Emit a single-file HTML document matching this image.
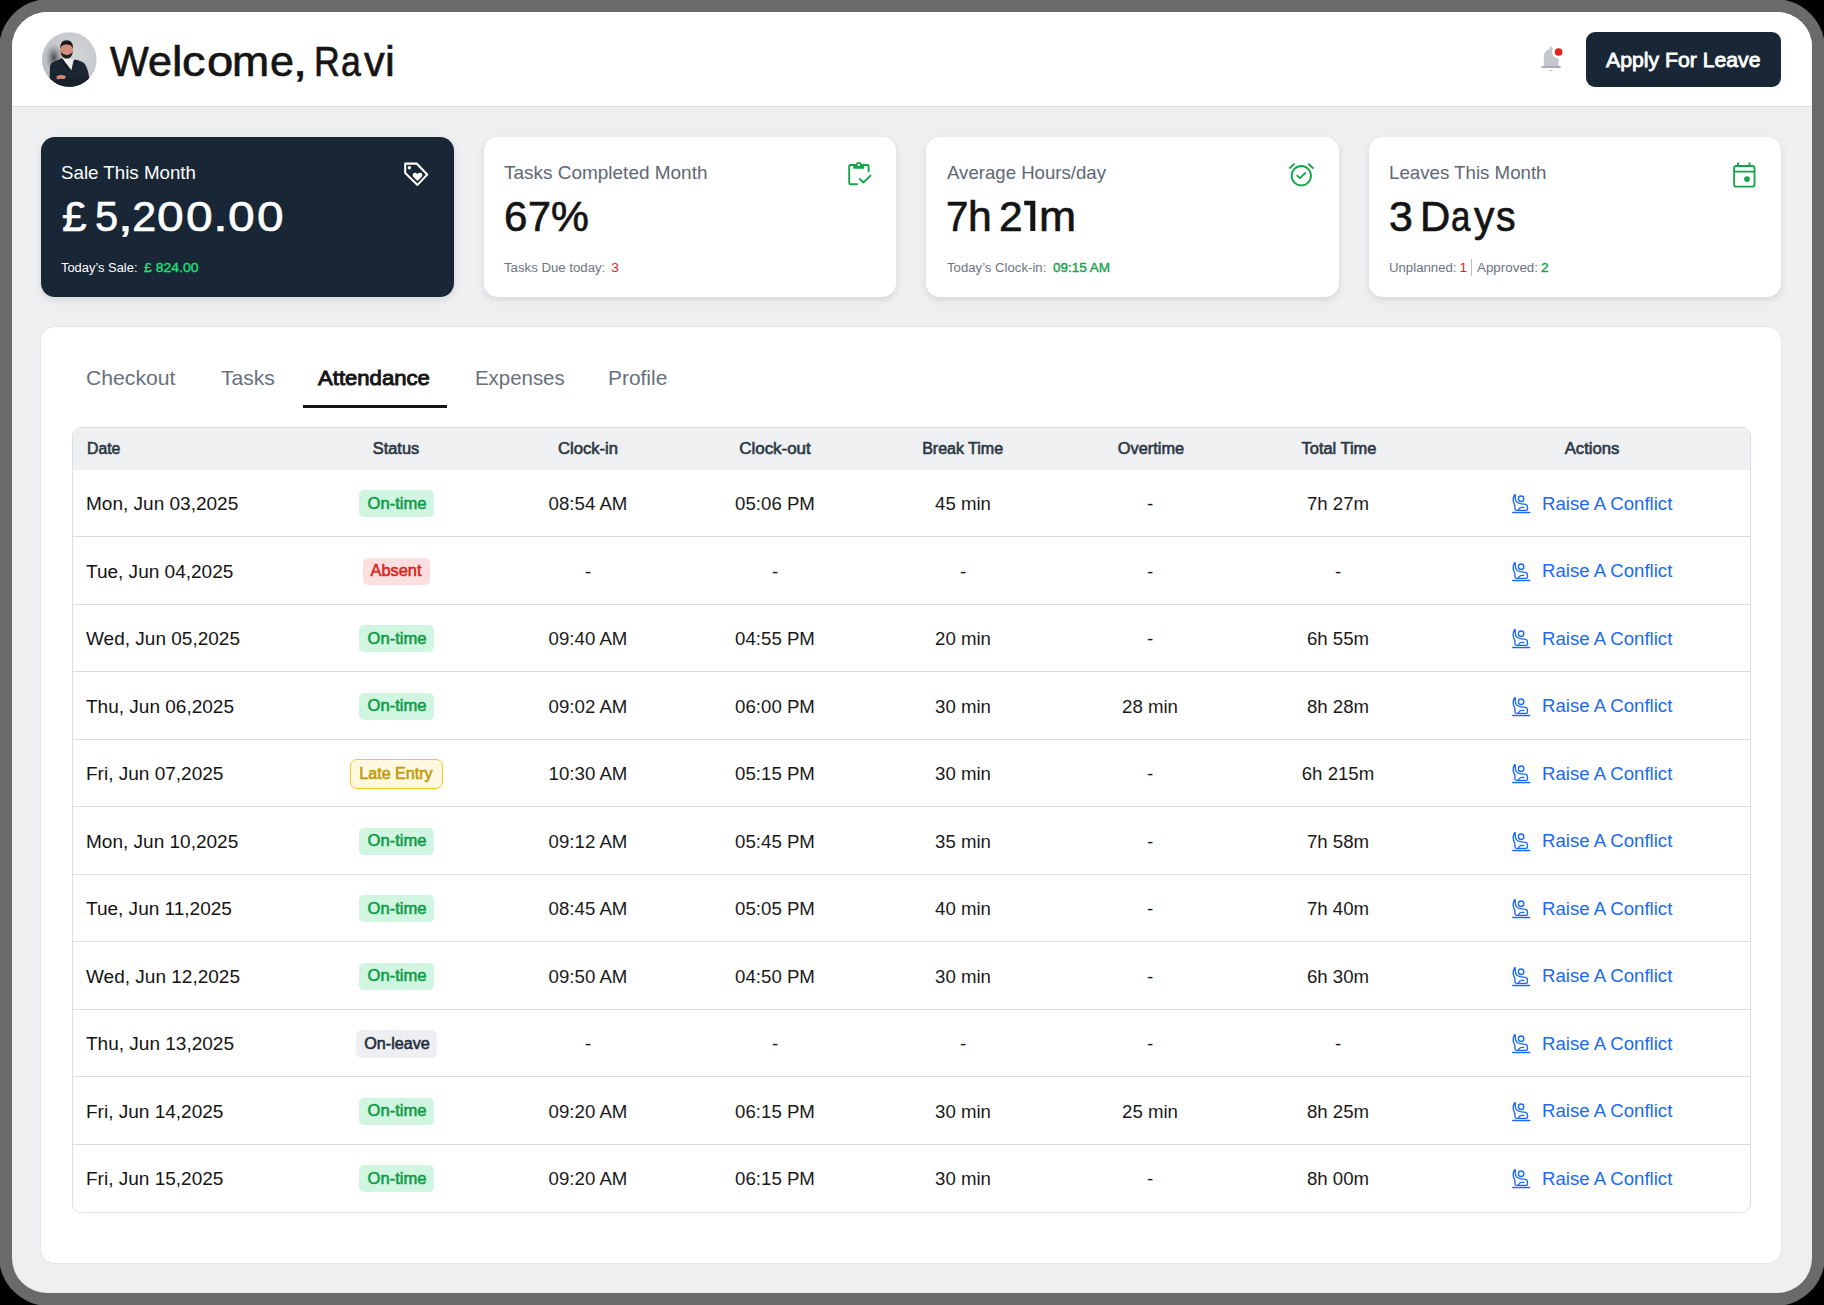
<!DOCTYPE html>
<html><head><meta charset="utf-8"><title>Attendance</title>
<style>
html,body{margin:0;padding:0;}
body{width:1824px;height:1305px;background:#000;position:relative;overflow:hidden;font-family:"Liberation Sans", sans-serif;}
.frame{position:absolute;left:-1.2px;top:-1.2px;width:1826.4px;height:1307.4px;background:#6A6A6A;border-radius:50px;}
.screen{position:absolute;left:0;top:0;width:1824px;height:1305px;background:#EEEFF1;clip-path:inset(12px round 35px);}
.t{position:absolute;white-space:nowrap;}
.r{position:absolute;}
</style></head><body>
<div class="frame"></div>
<div class="screen">
<div class="r" style="left:12px;top:12px;width:1800px;height:94px;background:#fff;"></div>
<div class="r" style="left:12px;top:106px;width:1800px;height:1px;background:#DDE0E3;"></div>
<svg class="r" style="left:42px;top:32px" width="55" height="55" viewBox="0 0 55 55">
<defs><radialGradient id="ag" cx="0.6" cy="0.4" r="0.7"><stop offset="0" stop-color="#d2d4d7"/><stop offset="0.7" stop-color="#c6c9cd"/><stop offset="1" stop-color="#b0b3b8"/></radialGradient>
<radialGradient id="sh" cx="0.5" cy="0.5" r="0.5"><stop offset="0" stop-color="#3a3d42" stop-opacity="0.9"/><stop offset="1" stop-color="#6a6d72" stop-opacity="0"/></radialGradient>
<clipPath id="ac"><circle cx="27.3" cy="27.5" r="27.3"/></clipPath></defs>
<g clip-path="url(#ac)">
<rect width="55" height="55" fill="url(#ag)"/>
<ellipse cx="12" cy="26" rx="9" ry="15" fill="url(#sh)"/>
<path d="M7 60 L8 35 C8.5 31 11 30 15 28.5 L20 26 L24.5 28 L29 30 L33 27.5 C37 28.5 41 29.5 42.5 31.5 C45 35 46.5 40 47 45 L50 60 Z" fill="#1b2633"/>
<path d="M19.8 25.8 L31.8 27.4 L29.3 38.5 Z" fill="#efefef"/>
<path d="M20 26.5 L29 38 L27 39 L18.5 28 Z" fill="#151c26"/>
<path d="M14.5 44.5 C17 42.5 21.5 42.5 24 44.5 L22.5 47.5 C20 46.5 17 46.8 15 47.5 Z" fill="#d48774"/>
<path d="M11 50 C20 46 32 46 46 44 L47 56 L10 56 Z" fill="#18212c"/>
<ellipse cx="24.6" cy="17" rx="6.2" ry="7.6" fill="#d38a76"/>
<path d="M18.3 17 C17.8 11 20.5 8.2 24.6 8.2 C28.7 8.2 31.4 11 31 17 C30 13.5 28 12.6 24.6 12.6 C21.2 12.6 19.2 13.5 18.3 17 Z" fill="#1a1a1a"/>
<path d="M18.5 18.5 C19 24.5 21.5 26.6 24.8 26.6 C28.1 26.6 30.5 24.5 30.9 18.5 C30 21.5 28.3 22.5 24.8 22.5 C21.3 22.5 19.6 21.5 18.5 18.5 Z" fill="#262220"/>
<path d="M22.3 21.3 C23.5 22.3 26 22.3 27.3 21.3 C26.5 23 23.2 23 22.3 21.3 Z" fill="#f2f2f2"/>
</g></svg>
<div class="t" style="top:40.00px;left:109.69px;font-size:43px;line-height:43px;color:#151515;font-weight:400;-webkit-text-stroke:0.7px #151515;transform:scaleX(0.9549);transform-origin:left 50%;">W</div>
<div class="t" style="top:40.00px;left:148.34px;font-size:43px;line-height:43px;color:#151515;font-weight:400;-webkit-text-stroke:0.7px #151515;transform:scaleX(1.0043);transform-origin:left 50%;">e</div>
<div class="t" style="top:40.00px;left:172.05px;font-size:43px;line-height:43px;color:#151515;font-weight:400;-webkit-text-stroke:0.7px #151515;transform:scaleX(1.0928);transform-origin:left 50%;">l</div>
<div class="t" style="top:40.00px;left:182.38px;font-size:43px;line-height:43px;color:#151515;font-weight:400;-webkit-text-stroke:0.7px #151515;transform:scaleX(1.0894);transform-origin:left 50%;">c</div>
<div class="t" style="top:40.00px;left:206.57px;font-size:43px;line-height:43px;color:#151515;font-weight:400;-webkit-text-stroke:0.7px #151515;transform:scaleX(1.0954);transform-origin:left 50%;">o</div>
<div class="t" style="top:40.00px;left:232.31px;font-size:43px;line-height:43px;color:#151515;font-weight:400;-webkit-text-stroke:0.7px #151515;transform:scaleX(1.0361);transform-origin:left 50%;">m</div>
<div class="t" style="top:40.00px;left:269.94px;font-size:43px;line-height:43px;color:#151515;font-weight:400;-webkit-text-stroke:0.7px #151515;transform:scaleX(1.0043);transform-origin:left 50%;">e</div>
<div class="t" style="top:40.00px;left:293.48px;font-size:43px;line-height:43px;color:#151515;font-weight:400;-webkit-text-stroke:0.7px #151515;transform:scaleX(1.1803);transform-origin:left 50%;">,</div>
<div class="t" style="top:40.00px;left:314.42px;font-size:43px;line-height:43px;color:#151515;font-weight:400;-webkit-text-stroke:0.7px #151515;transform:scaleX(0.8307);transform-origin:left 50%;">R</div>
<div class="t" style="top:40.00px;left:340.95px;font-size:43px;line-height:43px;color:#151515;font-weight:400;-webkit-text-stroke:0.7px #151515;transform:scaleX(0.8289);transform-origin:left 50%;">a</div>
<div class="t" style="top:40.00px;left:363.68px;font-size:43px;line-height:43px;color:#151515;font-weight:400;-webkit-text-stroke:0.7px #151515;transform:scaleX(0.9608);transform-origin:left 50%;">v</div>
<div class="t" style="top:40.00px;left:385.14px;font-size:43px;line-height:43px;color:#151515;font-weight:400;-webkit-text-stroke:0.7px #151515;transform:scaleX(1.0259);transform-origin:left 50%;">i</div>
<svg class="r" style="left:1530px;top:38px" width="45" height="42" viewBox="0 0 45 42">
<path d="M13.8 28.4 L13.8 19.2 C13.8 15 16 12.2 19.6 11.2 C19.7 9.6 20.3 8.4 21.1 8.4 C21.9 8.4 22.6 9.6 22.7 11.3 A6.5 6.5 0 0 0 28.6 20.5 L28.6 28.4 Z" fill="#c4c7cc"/>
<rect x="11.3" y="28" width="19.6" height="2.1" rx="1.05" fill="#a9adb3"/>
<path d="M19.2 32.1 Q21.1 33.9 23 32.1 Z" fill="#a9adb3"/>
<circle cx="28.6" cy="14" r="3.85" fill="#e0241b"/>
</svg>
<div class="r" style="left:1586px;top:32px;width:195px;height:55px;background:#182635;border-radius:9px;"></div>
<div class="t" style="top:50.00px;left:1605.80px;font-size:20.6px;line-height:20.6px;color:#ffffff;font-weight:400;-webkit-text-stroke-width:0.8px;transform:scaleX(1.0302);transform-origin:left 50%;">Apply For Leave</div>
<div class="r" style="left:41px;top:137px;width:413px;height:160px;background:#182635;border-radius:14px;box-shadow:0 3px 7px rgba(20,30,40,0.11);"></div>
<div class="r" style="left:484px;top:137px;width:412px;height:160px;background:#ffffff;border-radius:14px;box-shadow:0 3px 7px rgba(20,30,40,0.11);"></div>
<div class="r" style="left:926px;top:137px;width:413px;height:160px;background:#ffffff;border-radius:14px;box-shadow:0 3px 7px rgba(20,30,40,0.11);"></div>
<div class="r" style="left:1369px;top:137px;width:412px;height:160px;background:#ffffff;border-radius:14px;box-shadow:0 3px 7px rgba(20,30,40,0.11);"></div>
<div class="t" style="top:165.30px;left:61.00px;font-size:17.9px;line-height:17.9px;color:#ffffff;font-weight:400;transform:scaleX(1.0469);transform-origin:left 50%;">Sale This Month</div>
<div class="t" style="top:195.00px;left:61.71px;font-size:43px;line-height:43px;color:#ffffff;font-weight:400;-webkit-text-stroke:0.7px #ffffff;transform:scaleX(1.0296);transform-origin:left 50%;">£</div>
<div class="t" style="top:195.00px;left:95.09px;font-size:43px;line-height:43px;color:#ffffff;font-weight:400;-webkit-text-stroke:0.7px #ffffff;transform:scaleX(0.9677);transform-origin:left 50%;">5</div>
<div class="t" style="top:195.00px;left:118.31px;font-size:43px;line-height:43px;color:#ffffff;font-weight:400;-webkit-text-stroke:0.7px #ffffff;transform:scaleX(1.2500);transform-origin:left 50%;">,</div>
<div class="t" style="top:195.00px;left:132.20px;font-size:43px;line-height:43px;color:#ffffff;font-weight:400;-webkit-text-stroke:0.7px #ffffff;">2</div>
<div class="t" style="top:195.00px;left:156.73px;font-size:43px;line-height:43px;color:#ffffff;font-weight:400;-webkit-text-stroke:0.7px #ffffff;transform:scaleX(1.1151);transform-origin:left 50%;">0</div>
<div class="t" style="top:195.00px;left:185.63px;font-size:43px;line-height:43px;color:#ffffff;font-weight:400;-webkit-text-stroke:0.7px #ffffff;transform:scaleX(1.1151);transform-origin:left 50%;">0</div>
<div class="t" style="top:195.00px;left:212.93px;font-size:43px;line-height:43px;color:#ffffff;font-weight:400;-webkit-text-stroke:0.7px #ffffff;transform:scaleX(1.2442);transform-origin:left 50%;">.</div>
<div class="t" style="top:195.00px;left:227.73px;font-size:43px;line-height:43px;color:#ffffff;font-weight:400;-webkit-text-stroke:0.7px #ffffff;transform:scaleX(1.1151);transform-origin:left 50%;">0</div>
<div class="t" style="top:195.00px;left:257.44px;font-size:43px;line-height:43px;color:#ffffff;font-weight:400;-webkit-text-stroke:0.7px #ffffff;transform:scaleX(1.1104);transform-origin:left 50%;">0</div>
<div class="t" style="top:261.40px;left:61.30px;font-size:13.7px;line-height:13.7px;color:#ffffff;font-weight:400;transform:scaleX(0.9424);transform-origin:left 50%;">Today’s Sale:</div>
<div class="t" style="top:261.40px;left:144.00px;font-size:13.7px;line-height:13.7px;color:#1CE27B;font-weight:400;-webkit-text-stroke-width:0.35px;transform:scaleX(1.0229);transform-origin:left 50%;">£ 824.00</div>
<svg class="r" style="left:395px;top:155px" width="45" height="40" viewBox="0 0 45 40">
<path d="M10.2 8.6 L21.6 8.6 L32.2 19.6 L22.5 29.9 L10.2 17.9 Z" fill="none" stroke="#fff" stroke-width="2.1" stroke-linejoin="round"/>
<circle cx="14.4" cy="12.7" r="1.7" fill="#fff"/>
<path d="M22.5 25.9 L18.5 22.1 C17 20.6 17.6 18.1 19.6 17.8 C20.9 17.6 21.8 18.3 22.5 19.1 C23.2 18.3 24.1 17.6 25.4 17.8 C27.4 18.1 28 20.6 26.5 22.1 Z" fill="#fff"/>
</svg>
<div class="t" style="top:164.30px;left:504.00px;font-size:18.2px;line-height:18.2px;color:#5D6874;font-weight:400;transform:scaleX(1.0430);transform-origin:left 50%;">Tasks Completed Month</div>
<div class="t" style="top:195.00px;left:504.15px;font-size:43px;line-height:43px;color:#141414;font-weight:400;-webkit-text-stroke:0.7px #141414;transform:scaleX(0.9773);transform-origin:left 50%;">6</div>
<div class="t" style="top:195.00px;left:527.50px;font-size:43px;line-height:43px;color:#141414;font-weight:400;-webkit-text-stroke:0.7px #141414;transform:scaleX(0.9594);transform-origin:left 50%;">7</div>
<div class="t" style="top:195.00px;left:551.42px;font-size:43px;line-height:43px;color:#141414;font-weight:400;-webkit-text-stroke:0.7px #141414;transform:scaleX(0.9896);transform-origin:left 50%;">%</div>
<div class="t" style="top:261.40px;left:504.00px;font-size:13.7px;line-height:13.7px;color:#6A7480;font-weight:400;transform:scaleX(0.9648);transform-origin:left 50%;">Tasks Due today:</div>
<div class="t" style="top:261.40px;left:611.20px;font-size:13.7px;line-height:13.7px;color:#DC2626;font-weight:400;">3</div>
<svg class="r" style="left:838px;top:155px" width="45" height="40" viewBox="0 0 45 40">
<path d="M19 29.2 L12.4 29.2 C11.7 29.2 11.2 28.7 11.2 28 L11.2 11.2 C11.2 10.5 11.7 10 12.4 10 L29.4 10 C30.1 10 30.6 10.5 30.6 11.2 L30.6 16.3" fill="none" stroke="#16A34A" stroke-width="1.9" stroke-linecap="round"/>
<rect x="15.3" y="10" width="10.8" height="3.7" rx="0.8" fill="#16A34A"/>
<circle cx="20.7" cy="9.9" r="2.9" fill="#16A34A"/>
<circle cx="20.7" cy="9.9" r="1.2" fill="#fff"/>
<path d="M21.7 23.9 L25.4 27.5 L32.5 20.6" fill="none" stroke="#16A34A" stroke-width="1.9" stroke-linecap="round" stroke-linejoin="round"/>
</svg>
<div class="t" style="top:164.30px;left:946.60px;font-size:18.2px;line-height:18.2px;color:#5D6874;font-weight:400;transform:scaleX(1.0234);transform-origin:left 50%;">Average Hours/day</div>
<div class="t" style="top:195.00px;left:946.06px;font-size:43px;line-height:43px;color:#141414;font-weight:400;-webkit-text-stroke:0.7px #141414;transform:scaleX(0.9346);transform-origin:left 50%;">7</div>
<div class="t" style="top:195.00px;left:968.46px;font-size:43px;line-height:43px;color:#141414;font-weight:400;-webkit-text-stroke:0.7px #141414;transform:scaleX(0.9923);transform-origin:left 50%;">h</div>
<div class="t" style="top:195.00px;left:999.12px;font-size:43px;line-height:43px;color:#141414;font-weight:400;-webkit-text-stroke:0.7px #141414;transform:scaleX(0.9898);transform-origin:left 50%;">2</div>
<div class="t" style="top:195.00px;left:1038.61px;font-size:43px;line-height:43px;color:#141414;font-weight:400;-webkit-text-stroke:0.7px #141414;transform:scaleX(1.0361);transform-origin:left 50%;">m</div>
<svg class="r" style="left:1020px;top:195px" width="20" height="40" viewBox="1020 195 20 40"><path d="M1024.2 200.8 L1035.3 200.8 L1035.3 231 L1030.3 231 L1030.3 205.2 L1024.2 205.2 Z" fill="#141414"/></svg>
<div class="t" style="top:261.40px;left:946.60px;font-size:13.7px;line-height:13.7px;color:#6A7480;font-weight:400;transform:scaleX(0.9622);transform-origin:left 50%;">Today’s Clock-in:</div>
<div class="t" style="top:261.40px;left:1052.60px;font-size:13.7px;line-height:13.7px;color:#16A34A;font-weight:400;-webkit-text-stroke-width:0.4px;transform:scaleX(0.9854);transform-origin:left 50%;">09:15 AM</div>
<svg class="r" style="left:1280px;top:155px" width="45" height="40" viewBox="0 0 45 40">
<circle cx="21.3" cy="20.7" r="9.7" fill="none" stroke="#16A34A" stroke-width="1.85"/>
<path d="M9.8 13 L14.1 9.1 M28.7 9.2 L32.9 13" stroke="#16A34A" stroke-width="1.85" stroke-linecap="round"/>
<path d="M17.2 20.6 L19.9 23.2 L25.3 17.9" fill="none" stroke="#16A34A" stroke-width="1.85" stroke-linecap="round" stroke-linejoin="round"/>
</svg>
<div class="t" style="top:164.30px;left:1388.50px;font-size:18.2px;line-height:18.2px;color:#5D6874;font-weight:400;transform:scaleX(1.0271);transform-origin:left 50%;">Leaves This Month</div>
<div class="t" style="top:195.00px;left:1389.12px;font-size:43px;line-height:43px;color:#141414;font-weight:400;-webkit-text-stroke:0.7px #141414;transform:scaleX(0.9961);transform-origin:left 50%;">3</div>
<div class="t" style="top:195.00px;left:1420.21px;font-size:43px;line-height:43px;color:#141414;font-weight:400;-webkit-text-stroke:0.7px #141414;transform:scaleX(0.9749);transform-origin:left 50%;">D</div>
<div class="t" style="top:195.00px;left:1450.58px;font-size:43px;line-height:43px;color:#141414;font-weight:400;-webkit-text-stroke:0.7px #141414;transform:scaleX(0.8113);transform-origin:left 50%;">a</div>
<div class="t" style="top:195.00px;left:1474.17px;font-size:43px;line-height:43px;color:#141414;font-weight:400;-webkit-text-stroke:0.7px #141414;transform:scaleX(0.9488);transform-origin:left 50%;">y</div>
<div class="t" style="top:195.00px;left:1496.15px;font-size:43px;line-height:43px;color:#141414;font-weight:400;-webkit-text-stroke:0.7px #141414;transform:scaleX(0.9101);transform-origin:left 50%;">s</div>
<div class="t" style="top:261.40px;left:1388.60px;font-size:13.7px;line-height:13.7px;color:#6A7480;font-weight:400;transform:scaleX(0.9641);transform-origin:left 50%;">Unplanned:</div>
<div class="t" style="top:261.40px;left:1459.50px;font-size:13.7px;line-height:13.7px;color:#DC2626;font-weight:400;">1</div>
<div class="r" style="left:1471px;top:259px;width:1px;height:17px;background:#B9BFC6;"></div>
<div class="t" style="top:261.40px;left:1476.60px;font-size:13.7px;line-height:13.7px;color:#6A7480;font-weight:400;transform:scaleX(0.9775);transform-origin:left 50%;">Approved:</div>
<div class="t" style="top:261.40px;left:1541.00px;font-size:13.7px;line-height:13.7px;color:#16A34A;font-weight:400;-webkit-text-stroke-width:0.4px;">2</div>
<svg class="r" style="left:1722px;top:155px" width="45" height="40" viewBox="0 0 45 40">
<rect x="12.1" y="11" width="20.4" height="20.6" rx="2.2" fill="none" stroke="#16A34A" stroke-width="1.85"/>
<path d="M12.1 16.6 L32.5 16.6 M16.1 8.2 L16.1 11 M27.5 8.2 L27.5 11" stroke="#16A34A" stroke-width="1.85" stroke-linecap="round"/>
<circle cx="25" cy="24.1" r="2.9" fill="#16A34A"/>
</svg>
<div class="r" style="left:41px;top:327px;width:1740px;height:936px;background:#fff;border-radius:14px;box-shadow:0 0 0 1px rgba(30,40,50,0.045);"></div>
<div class="t" style="top:368.00px;left:86.20px;font-size:20.7px;line-height:20.7px;color:#66717D;font-weight:400;transform:scaleX(1.0240);transform-origin:left 50%;">Checkout</div>
<div class="t" style="top:368.00px;left:220.60px;font-size:20.7px;line-height:20.7px;color:#66717D;font-weight:400;transform:scaleX(1.0172);transform-origin:left 50%;">Tasks</div>
<div class="t" style="top:368.00px;left:317.60px;font-size:20.7px;line-height:20.7px;color:#141414;font-weight:400;-webkit-text-stroke-width:0.9px;transform:scaleX(1.0681);transform-origin:left 50%;">Attendance</div>
<div class="t" style="top:368.00px;left:474.60px;font-size:20.7px;line-height:20.7px;color:#66717D;font-weight:400;transform:scaleX(0.9872);transform-origin:left 50%;">Expenses</div>
<div class="t" style="top:368.00px;left:607.60px;font-size:20.7px;line-height:20.7px;color:#66717D;font-weight:400;transform:scaleX(1.0112);transform-origin:left 50%;">Profile</div>
<div class="r" style="left:303px;top:405px;width:144px;height:3px;background:#121417;"></div>
<div class="r" style="left:72px;top:427px;width:1679px;height:786px;border:1px solid #DBDEE2;border-radius:9px;box-sizing:border-box;overflow:hidden;"></div>
<div class="r" style="left:73px;top:428px;width:1677px;height:41.5px;background:#EEF0F2;border-radius:8px 8px 0 0;"></div>
<div class="t" style="top:441.00px;left:86.60px;font-size:16px;line-height:16px;color:#2C3844;font-weight:400;-webkit-text-stroke-width:0.6px;transform:scaleX(0.9853);transform-origin:left 50%;">Date</div>
<div class="t" style="top:441.00px;left:396.40px;font-size:16px;line-height:16px;color:#2C3844;font-weight:400;width:200px;margin-left:-100.00px;text-align:center;-webkit-text-stroke-width:0.6px;transform:scaleX(1.0251);transform-origin:center 50%;">Status</div>
<div class="t" style="top:441.00px;left:587.80px;font-size:16px;line-height:16px;color:#2C3844;font-weight:400;width:200px;margin-left:-100.00px;text-align:center;-webkit-text-stroke-width:0.6px;transform:scaleX(1.0381);transform-origin:center 50%;">Clock-in</div>
<div class="t" style="top:441.00px;left:775.30px;font-size:16px;line-height:16px;color:#2C3844;font-weight:400;width:200px;margin-left:-100.00px;text-align:center;-webkit-text-stroke-width:0.6px;transform:scaleX(1.0580);transform-origin:center 50%;">Clock-out</div>
<div class="t" style="top:441.00px;left:962.60px;font-size:16px;line-height:16px;color:#2C3844;font-weight:400;width:200px;margin-left:-100.00px;text-align:center;-webkit-text-stroke-width:0.6px;">Break Time</div>
<div class="t" style="top:441.00px;left:1150.80px;font-size:16px;line-height:16px;color:#2C3844;font-weight:400;width:200px;margin-left:-100.00px;text-align:center;-webkit-text-stroke-width:0.6px;transform:scaleX(1.0215);transform-origin:center 50%;">Overtime</div>
<div class="t" style="top:441.00px;left:1338.60px;font-size:16px;line-height:16px;color:#2C3844;font-weight:400;width:200px;margin-left:-100.00px;text-align:center;-webkit-text-stroke-width:0.6px;transform:scaleX(1.0271);transform-origin:center 50%;">Total Time</div>
<div class="t" style="top:441.00px;left:1591.50px;font-size:16px;line-height:16px;color:#2C3844;font-weight:400;width:200px;margin-left:-100.00px;text-align:center;-webkit-text-stroke-width:0.6px;transform:scaleX(1.0406);transform-origin:center 50%;">Actions</div>
<div class="t" style="top:495.25px;left:86.30px;font-size:18.3px;line-height:18.3px;color:#141414;font-weight:-webkit-text-stroke-width:0.3px;;transform:scaleX(1.0400);transform-origin:left 50%;">Mon, Jun 03,2025</div>
<div class="r badge" style="left:359.3px;top:490.05px;width:74.6px;height:27px;background:#D0F5E1;border-radius:5px;"></div>
<div class="t" style="top:495.65px;left:396.60px;font-size:15.6px;line-height:15.6px;color:#0E9C45;font-weight:400;width:100px;margin-left:-50.00px;text-align:center;-webkit-text-stroke-width:0.55px;transform:scaleX(1.0601);transform-origin:center 50%;">On-time</div>
<div class="t" style="top:495.25px;left:587.80px;font-size:18.3px;line-height:18.3px;color:#1A1A1A;font-weight:400;width:160px;margin-left:-80.00px;text-align:center;transform:scaleX(1.0200);transform-origin:center 50%;">08:54 AM</div>
<div class="t" style="top:495.25px;left:775.30px;font-size:18.3px;line-height:18.3px;color:#1A1A1A;font-weight:400;width:160px;margin-left:-80.00px;text-align:center;transform:scaleX(1.0200);transform-origin:center 50%;">05:06 PM</div>
<div class="t" style="top:495.25px;left:962.60px;font-size:18.3px;line-height:18.3px;color:#1A1A1A;font-weight:400;width:160px;margin-left:-80.00px;text-align:center;transform:scaleX(1.0200);transform-origin:center 50%;">45 min</div>
<div class="t" style="top:495.25px;left:1150.00px;font-size:18.3px;line-height:18.3px;color:#1A1A1A;font-weight:400;width:160px;margin-left:-80.00px;text-align:center;transform:scaleX(1.0200);transform-origin:center 50%;">-</div>
<div class="t" style="top:495.25px;left:1338.00px;font-size:18.3px;line-height:18.3px;color:#1A1A1A;font-weight:400;width:160px;margin-left:-80.00px;text-align:center;transform:scaleX(1.0200);transform-origin:center 50%;">7h 27m</div>
<svg class="r" style="left:1505px;top:488.00px" width="35" height="30" viewBox="0 0 35 30">
<path d="M9.6 6.7 C8.7 8.2 8.1 10.3 8.2 12.4 C8.3 14.6 9.4 16 9.9 17.6 L9.9 20.6 C9.9 21.6 10.6 22.3 11.6 22.3 L21.2 22.3 C22 22.3 22.5 21.8 22.5 21 L22.5 19.4 C22.5 17.6 21.2 16.3 19.2 16.2 L16.3 15.9 C12.8 15.6 10.4 13.2 10.3 10.1 L10.2 6.7 Z" fill="none" stroke="#1A6AF4" stroke-width="1.35" stroke-linejoin="round"/>
<circle cx="16.1" cy="10.7" r="2.75" fill="none" stroke="#1A6AF4" stroke-width="1.35"/>
<path d="M13.6 21.6 C14.2 20.2 15.2 19.4 16.6 19.4 L18.8 19.4" fill="none" stroke="#1A6AF4" stroke-width="1.35" stroke-linecap="round"/>
<path d="M7.7 24.5 L24.7 24.5" stroke="#1A6AF4" stroke-width="1.35" stroke-linecap="round"/>
</svg>
<div class="t" style="top:494.95px;left:1541.60px;font-size:18.7px;line-height:18.7px;color:#1A6AF4;font-weight:400;transform:scaleX(0.9956);transform-origin:left 50%;">Raise A Conflict</div>
<div class="r" style="left:73px;top:536px;width:1677px;height:1px;background:#D9DCE0;"></div>
<div class="t" style="top:562.75px;left:86.30px;font-size:18.3px;line-height:18.3px;color:#141414;font-weight:-webkit-text-stroke-width:0.3px;;transform:scaleX(1.0400);transform-origin:left 50%;">Tue, Jun 04,2025</div>
<div class="r badge" style="left:363px;top:557.55px;width:67px;height:27px;background:#FCE0DF;border-radius:5px;"></div>
<div class="t" style="top:563.15px;left:396.40px;font-size:15.6px;line-height:15.6px;color:#DA2420;font-weight:400;width:100px;margin-left:-50.00px;text-align:center;-webkit-text-stroke-width:0.55px;transform:scaleX(1.0502);transform-origin:center 50%;">Absent</div>
<div class="t" style="top:562.75px;left:587.80px;font-size:18.3px;line-height:18.3px;color:#1A1A1A;font-weight:400;width:160px;margin-left:-80.00px;text-align:center;transform:scaleX(1.0200);transform-origin:center 50%;">-</div>
<div class="t" style="top:562.75px;left:775.30px;font-size:18.3px;line-height:18.3px;color:#1A1A1A;font-weight:400;width:160px;margin-left:-80.00px;text-align:center;transform:scaleX(1.0200);transform-origin:center 50%;">-</div>
<div class="t" style="top:562.75px;left:962.60px;font-size:18.3px;line-height:18.3px;color:#1A1A1A;font-weight:400;width:160px;margin-left:-80.00px;text-align:center;transform:scaleX(1.0200);transform-origin:center 50%;">-</div>
<div class="t" style="top:562.75px;left:1150.00px;font-size:18.3px;line-height:18.3px;color:#1A1A1A;font-weight:400;width:160px;margin-left:-80.00px;text-align:center;transform:scaleX(1.0200);transform-origin:center 50%;">-</div>
<div class="t" style="top:562.75px;left:1338.00px;font-size:18.3px;line-height:18.3px;color:#1A1A1A;font-weight:400;width:160px;margin-left:-80.00px;text-align:center;transform:scaleX(1.0200);transform-origin:center 50%;">-</div>
<svg class="r" style="left:1505px;top:555.50px" width="35" height="30" viewBox="0 0 35 30">
<path d="M9.6 6.7 C8.7 8.2 8.1 10.3 8.2 12.4 C8.3 14.6 9.4 16 9.9 17.6 L9.9 20.6 C9.9 21.6 10.6 22.3 11.6 22.3 L21.2 22.3 C22 22.3 22.5 21.8 22.5 21 L22.5 19.4 C22.5 17.6 21.2 16.3 19.2 16.2 L16.3 15.9 C12.8 15.6 10.4 13.2 10.3 10.1 L10.2 6.7 Z" fill="none" stroke="#1A6AF4" stroke-width="1.35" stroke-linejoin="round"/>
<circle cx="16.1" cy="10.7" r="2.75" fill="none" stroke="#1A6AF4" stroke-width="1.35"/>
<path d="M13.6 21.6 C14.2 20.2 15.2 19.4 16.6 19.4 L18.8 19.4" fill="none" stroke="#1A6AF4" stroke-width="1.35" stroke-linecap="round"/>
<path d="M7.7 24.5 L24.7 24.5" stroke="#1A6AF4" stroke-width="1.35" stroke-linecap="round"/>
</svg>
<div class="t" style="top:562.45px;left:1541.60px;font-size:18.7px;line-height:18.7px;color:#1A6AF4;font-weight:400;transform:scaleX(0.9956);transform-origin:left 50%;">Raise A Conflict</div>
<div class="r" style="left:73px;top:604px;width:1677px;height:1px;background:#D9DCE0;"></div>
<div class="t" style="top:630.25px;left:86.30px;font-size:18.3px;line-height:18.3px;color:#141414;font-weight:-webkit-text-stroke-width:0.3px;;transform:scaleX(1.0400);transform-origin:left 50%;">Wed, Jun 05,2025</div>
<div class="r badge" style="left:359.3px;top:625.05px;width:74.6px;height:27px;background:#D0F5E1;border-radius:5px;"></div>
<div class="t" style="top:630.65px;left:396.60px;font-size:15.6px;line-height:15.6px;color:#0E9C45;font-weight:400;width:100px;margin-left:-50.00px;text-align:center;-webkit-text-stroke-width:0.55px;transform:scaleX(1.0601);transform-origin:center 50%;">On-time</div>
<div class="t" style="top:630.25px;left:587.80px;font-size:18.3px;line-height:18.3px;color:#1A1A1A;font-weight:400;width:160px;margin-left:-80.00px;text-align:center;transform:scaleX(1.0200);transform-origin:center 50%;">09:40 AM</div>
<div class="t" style="top:630.25px;left:775.30px;font-size:18.3px;line-height:18.3px;color:#1A1A1A;font-weight:400;width:160px;margin-left:-80.00px;text-align:center;transform:scaleX(1.0200);transform-origin:center 50%;">04:55 PM</div>
<div class="t" style="top:630.25px;left:962.60px;font-size:18.3px;line-height:18.3px;color:#1A1A1A;font-weight:400;width:160px;margin-left:-80.00px;text-align:center;transform:scaleX(1.0200);transform-origin:center 50%;">20 min</div>
<div class="t" style="top:630.25px;left:1150.00px;font-size:18.3px;line-height:18.3px;color:#1A1A1A;font-weight:400;width:160px;margin-left:-80.00px;text-align:center;transform:scaleX(1.0200);transform-origin:center 50%;">-</div>
<div class="t" style="top:630.25px;left:1338.00px;font-size:18.3px;line-height:18.3px;color:#1A1A1A;font-weight:400;width:160px;margin-left:-80.00px;text-align:center;transform:scaleX(1.0200);transform-origin:center 50%;">6h 55m</div>
<svg class="r" style="left:1505px;top:623.00px" width="35" height="30" viewBox="0 0 35 30">
<path d="M9.6 6.7 C8.7 8.2 8.1 10.3 8.2 12.4 C8.3 14.6 9.4 16 9.9 17.6 L9.9 20.6 C9.9 21.6 10.6 22.3 11.6 22.3 L21.2 22.3 C22 22.3 22.5 21.8 22.5 21 L22.5 19.4 C22.5 17.6 21.2 16.3 19.2 16.2 L16.3 15.9 C12.8 15.6 10.4 13.2 10.3 10.1 L10.2 6.7 Z" fill="none" stroke="#1A6AF4" stroke-width="1.35" stroke-linejoin="round"/>
<circle cx="16.1" cy="10.7" r="2.75" fill="none" stroke="#1A6AF4" stroke-width="1.35"/>
<path d="M13.6 21.6 C14.2 20.2 15.2 19.4 16.6 19.4 L18.8 19.4" fill="none" stroke="#1A6AF4" stroke-width="1.35" stroke-linecap="round"/>
<path d="M7.7 24.5 L24.7 24.5" stroke="#1A6AF4" stroke-width="1.35" stroke-linecap="round"/>
</svg>
<div class="t" style="top:629.95px;left:1541.60px;font-size:18.7px;line-height:18.7px;color:#1A6AF4;font-weight:400;transform:scaleX(0.9956);transform-origin:left 50%;">Raise A Conflict</div>
<div class="r" style="left:73px;top:671px;width:1677px;height:1px;background:#D9DCE0;"></div>
<div class="t" style="top:697.75px;left:86.30px;font-size:18.3px;line-height:18.3px;color:#141414;font-weight:-webkit-text-stroke-width:0.3px;;transform:scaleX(1.0400);transform-origin:left 50%;">Thu, Jun 06,2025</div>
<div class="r badge" style="left:359.3px;top:692.55px;width:74.6px;height:27px;background:#D0F5E1;border-radius:5px;"></div>
<div class="t" style="top:698.15px;left:396.60px;font-size:15.6px;line-height:15.6px;color:#0E9C45;font-weight:400;width:100px;margin-left:-50.00px;text-align:center;-webkit-text-stroke-width:0.55px;transform:scaleX(1.0601);transform-origin:center 50%;">On-time</div>
<div class="t" style="top:697.75px;left:587.80px;font-size:18.3px;line-height:18.3px;color:#1A1A1A;font-weight:400;width:160px;margin-left:-80.00px;text-align:center;transform:scaleX(1.0200);transform-origin:center 50%;">09:02 AM</div>
<div class="t" style="top:697.75px;left:775.30px;font-size:18.3px;line-height:18.3px;color:#1A1A1A;font-weight:400;width:160px;margin-left:-80.00px;text-align:center;transform:scaleX(1.0200);transform-origin:center 50%;">06:00 PM</div>
<div class="t" style="top:697.75px;left:962.60px;font-size:18.3px;line-height:18.3px;color:#1A1A1A;font-weight:400;width:160px;margin-left:-80.00px;text-align:center;transform:scaleX(1.0200);transform-origin:center 50%;">30 min</div>
<div class="t" style="top:697.75px;left:1150.00px;font-size:18.3px;line-height:18.3px;color:#1A1A1A;font-weight:400;width:160px;margin-left:-80.00px;text-align:center;transform:scaleX(1.0200);transform-origin:center 50%;">28 min</div>
<div class="t" style="top:697.75px;left:1338.00px;font-size:18.3px;line-height:18.3px;color:#1A1A1A;font-weight:400;width:160px;margin-left:-80.00px;text-align:center;transform:scaleX(1.0200);transform-origin:center 50%;">8h 28m</div>
<svg class="r" style="left:1505px;top:690.50px" width="35" height="30" viewBox="0 0 35 30">
<path d="M9.6 6.7 C8.7 8.2 8.1 10.3 8.2 12.4 C8.3 14.6 9.4 16 9.9 17.6 L9.9 20.6 C9.9 21.6 10.6 22.3 11.6 22.3 L21.2 22.3 C22 22.3 22.5 21.8 22.5 21 L22.5 19.4 C22.5 17.6 21.2 16.3 19.2 16.2 L16.3 15.9 C12.8 15.6 10.4 13.2 10.3 10.1 L10.2 6.7 Z" fill="none" stroke="#1A6AF4" stroke-width="1.35" stroke-linejoin="round"/>
<circle cx="16.1" cy="10.7" r="2.75" fill="none" stroke="#1A6AF4" stroke-width="1.35"/>
<path d="M13.6 21.6 C14.2 20.2 15.2 19.4 16.6 19.4 L18.8 19.4" fill="none" stroke="#1A6AF4" stroke-width="1.35" stroke-linecap="round"/>
<path d="M7.7 24.5 L24.7 24.5" stroke="#1A6AF4" stroke-width="1.35" stroke-linecap="round"/>
</svg>
<div class="t" style="top:697.45px;left:1541.60px;font-size:18.7px;line-height:18.7px;color:#1A6AF4;font-weight:400;transform:scaleX(0.9956);transform-origin:left 50%;">Raise A Conflict</div>
<div class="r" style="left:73px;top:739px;width:1677px;height:1px;background:#D9DCE0;"></div>
<div class="t" style="top:765.25px;left:86.30px;font-size:18.3px;line-height:18.3px;color:#141414;font-weight:-webkit-text-stroke-width:0.3px;;transform:scaleX(1.0400);transform-origin:left 50%;">Fri, Jun 07,2025</div>
<div class="r badge" style="left:350.3px;top:758.75px;width:92.5px;height:30px;background:#FEF8E0;border:1.3px solid #F7C81E;border-radius:7px;box-sizing:border-box;"></div>
<div class="t" style="top:765.65px;left:396.20px;font-size:15.6px;line-height:15.6px;color:#C29A08;font-weight:400;width:120px;margin-left:-60.00px;text-align:center;-webkit-text-stroke-width:0.55px;transform:scaleX(1.0313);transform-origin:center 50%;">Late Entry</div>
<div class="t" style="top:765.25px;left:587.80px;font-size:18.3px;line-height:18.3px;color:#1A1A1A;font-weight:400;width:160px;margin-left:-80.00px;text-align:center;transform:scaleX(1.0200);transform-origin:center 50%;">10:30 AM</div>
<div class="t" style="top:765.25px;left:775.30px;font-size:18.3px;line-height:18.3px;color:#1A1A1A;font-weight:400;width:160px;margin-left:-80.00px;text-align:center;transform:scaleX(1.0200);transform-origin:center 50%;">05:15 PM</div>
<div class="t" style="top:765.25px;left:962.60px;font-size:18.3px;line-height:18.3px;color:#1A1A1A;font-weight:400;width:160px;margin-left:-80.00px;text-align:center;transform:scaleX(1.0200);transform-origin:center 50%;">30 min</div>
<div class="t" style="top:765.25px;left:1150.00px;font-size:18.3px;line-height:18.3px;color:#1A1A1A;font-weight:400;width:160px;margin-left:-80.00px;text-align:center;transform:scaleX(1.0200);transform-origin:center 50%;">-</div>
<div class="t" style="top:765.25px;left:1338.00px;font-size:18.3px;line-height:18.3px;color:#1A1A1A;font-weight:400;width:160px;margin-left:-80.00px;text-align:center;transform:scaleX(1.0200);transform-origin:center 50%;">6h 215m</div>
<svg class="r" style="left:1505px;top:758.00px" width="35" height="30" viewBox="0 0 35 30">
<path d="M9.6 6.7 C8.7 8.2 8.1 10.3 8.2 12.4 C8.3 14.6 9.4 16 9.9 17.6 L9.9 20.6 C9.9 21.6 10.6 22.3 11.6 22.3 L21.2 22.3 C22 22.3 22.5 21.8 22.5 21 L22.5 19.4 C22.5 17.6 21.2 16.3 19.2 16.2 L16.3 15.9 C12.8 15.6 10.4 13.2 10.3 10.1 L10.2 6.7 Z" fill="none" stroke="#1A6AF4" stroke-width="1.35" stroke-linejoin="round"/>
<circle cx="16.1" cy="10.7" r="2.75" fill="none" stroke="#1A6AF4" stroke-width="1.35"/>
<path d="M13.6 21.6 C14.2 20.2 15.2 19.4 16.6 19.4 L18.8 19.4" fill="none" stroke="#1A6AF4" stroke-width="1.35" stroke-linecap="round"/>
<path d="M7.7 24.5 L24.7 24.5" stroke="#1A6AF4" stroke-width="1.35" stroke-linecap="round"/>
</svg>
<div class="t" style="top:764.95px;left:1541.60px;font-size:18.7px;line-height:18.7px;color:#1A6AF4;font-weight:400;transform:scaleX(0.9956);transform-origin:left 50%;">Raise A Conflict</div>
<div class="r" style="left:73px;top:806px;width:1677px;height:1px;background:#D9DCE0;"></div>
<div class="t" style="top:832.75px;left:86.30px;font-size:18.3px;line-height:18.3px;color:#141414;font-weight:-webkit-text-stroke-width:0.3px;;transform:scaleX(1.0400);transform-origin:left 50%;">Mon, Jun 10,2025</div>
<div class="r badge" style="left:359.3px;top:827.55px;width:74.6px;height:27px;background:#D0F5E1;border-radius:5px;"></div>
<div class="t" style="top:833.15px;left:396.60px;font-size:15.6px;line-height:15.6px;color:#0E9C45;font-weight:400;width:100px;margin-left:-50.00px;text-align:center;-webkit-text-stroke-width:0.55px;transform:scaleX(1.0601);transform-origin:center 50%;">On-time</div>
<div class="t" style="top:832.75px;left:587.80px;font-size:18.3px;line-height:18.3px;color:#1A1A1A;font-weight:400;width:160px;margin-left:-80.00px;text-align:center;transform:scaleX(1.0200);transform-origin:center 50%;">09:12 AM</div>
<div class="t" style="top:832.75px;left:775.30px;font-size:18.3px;line-height:18.3px;color:#1A1A1A;font-weight:400;width:160px;margin-left:-80.00px;text-align:center;transform:scaleX(1.0200);transform-origin:center 50%;">05:45 PM</div>
<div class="t" style="top:832.75px;left:962.60px;font-size:18.3px;line-height:18.3px;color:#1A1A1A;font-weight:400;width:160px;margin-left:-80.00px;text-align:center;transform:scaleX(1.0200);transform-origin:center 50%;">35 min</div>
<div class="t" style="top:832.75px;left:1150.00px;font-size:18.3px;line-height:18.3px;color:#1A1A1A;font-weight:400;width:160px;margin-left:-80.00px;text-align:center;transform:scaleX(1.0200);transform-origin:center 50%;">-</div>
<div class="t" style="top:832.75px;left:1338.00px;font-size:18.3px;line-height:18.3px;color:#1A1A1A;font-weight:400;width:160px;margin-left:-80.00px;text-align:center;transform:scaleX(1.0200);transform-origin:center 50%;">7h 58m</div>
<svg class="r" style="left:1505px;top:825.50px" width="35" height="30" viewBox="0 0 35 30">
<path d="M9.6 6.7 C8.7 8.2 8.1 10.3 8.2 12.4 C8.3 14.6 9.4 16 9.9 17.6 L9.9 20.6 C9.9 21.6 10.6 22.3 11.6 22.3 L21.2 22.3 C22 22.3 22.5 21.8 22.5 21 L22.5 19.4 C22.5 17.6 21.2 16.3 19.2 16.2 L16.3 15.9 C12.8 15.6 10.4 13.2 10.3 10.1 L10.2 6.7 Z" fill="none" stroke="#1A6AF4" stroke-width="1.35" stroke-linejoin="round"/>
<circle cx="16.1" cy="10.7" r="2.75" fill="none" stroke="#1A6AF4" stroke-width="1.35"/>
<path d="M13.6 21.6 C14.2 20.2 15.2 19.4 16.6 19.4 L18.8 19.4" fill="none" stroke="#1A6AF4" stroke-width="1.35" stroke-linecap="round"/>
<path d="M7.7 24.5 L24.7 24.5" stroke="#1A6AF4" stroke-width="1.35" stroke-linecap="round"/>
</svg>
<div class="t" style="top:832.45px;left:1541.60px;font-size:18.7px;line-height:18.7px;color:#1A6AF4;font-weight:400;transform:scaleX(0.9956);transform-origin:left 50%;">Raise A Conflict</div>
<div class="r" style="left:73px;top:874px;width:1677px;height:1px;background:#D9DCE0;"></div>
<div class="t" style="top:900.25px;left:86.30px;font-size:18.3px;line-height:18.3px;color:#141414;font-weight:-webkit-text-stroke-width:0.3px;;transform:scaleX(1.0400);transform-origin:left 50%;">Tue, Jun 11,2025</div>
<div class="r badge" style="left:359.3px;top:895.05px;width:74.6px;height:27px;background:#D0F5E1;border-radius:5px;"></div>
<div class="t" style="top:900.65px;left:396.60px;font-size:15.6px;line-height:15.6px;color:#0E9C45;font-weight:400;width:100px;margin-left:-50.00px;text-align:center;-webkit-text-stroke-width:0.55px;transform:scaleX(1.0601);transform-origin:center 50%;">On-time</div>
<div class="t" style="top:900.25px;left:587.80px;font-size:18.3px;line-height:18.3px;color:#1A1A1A;font-weight:400;width:160px;margin-left:-80.00px;text-align:center;transform:scaleX(1.0200);transform-origin:center 50%;">08:45 AM</div>
<div class="t" style="top:900.25px;left:775.30px;font-size:18.3px;line-height:18.3px;color:#1A1A1A;font-weight:400;width:160px;margin-left:-80.00px;text-align:center;transform:scaleX(1.0200);transform-origin:center 50%;">05:05 PM</div>
<div class="t" style="top:900.25px;left:962.60px;font-size:18.3px;line-height:18.3px;color:#1A1A1A;font-weight:400;width:160px;margin-left:-80.00px;text-align:center;transform:scaleX(1.0200);transform-origin:center 50%;">40 min</div>
<div class="t" style="top:900.25px;left:1150.00px;font-size:18.3px;line-height:18.3px;color:#1A1A1A;font-weight:400;width:160px;margin-left:-80.00px;text-align:center;transform:scaleX(1.0200);transform-origin:center 50%;">-</div>
<div class="t" style="top:900.25px;left:1338.00px;font-size:18.3px;line-height:18.3px;color:#1A1A1A;font-weight:400;width:160px;margin-left:-80.00px;text-align:center;transform:scaleX(1.0200);transform-origin:center 50%;">7h 40m</div>
<svg class="r" style="left:1505px;top:893.00px" width="35" height="30" viewBox="0 0 35 30">
<path d="M9.6 6.7 C8.7 8.2 8.1 10.3 8.2 12.4 C8.3 14.6 9.4 16 9.9 17.6 L9.9 20.6 C9.9 21.6 10.6 22.3 11.6 22.3 L21.2 22.3 C22 22.3 22.5 21.8 22.5 21 L22.5 19.4 C22.5 17.6 21.2 16.3 19.2 16.2 L16.3 15.9 C12.8 15.6 10.4 13.2 10.3 10.1 L10.2 6.7 Z" fill="none" stroke="#1A6AF4" stroke-width="1.35" stroke-linejoin="round"/>
<circle cx="16.1" cy="10.7" r="2.75" fill="none" stroke="#1A6AF4" stroke-width="1.35"/>
<path d="M13.6 21.6 C14.2 20.2 15.2 19.4 16.6 19.4 L18.8 19.4" fill="none" stroke="#1A6AF4" stroke-width="1.35" stroke-linecap="round"/>
<path d="M7.7 24.5 L24.7 24.5" stroke="#1A6AF4" stroke-width="1.35" stroke-linecap="round"/>
</svg>
<div class="t" style="top:899.95px;left:1541.60px;font-size:18.7px;line-height:18.7px;color:#1A6AF4;font-weight:400;transform:scaleX(0.9956);transform-origin:left 50%;">Raise A Conflict</div>
<div class="r" style="left:73px;top:941px;width:1677px;height:1px;background:#D9DCE0;"></div>
<div class="t" style="top:967.75px;left:86.30px;font-size:18.3px;line-height:18.3px;color:#141414;font-weight:-webkit-text-stroke-width:0.3px;;transform:scaleX(1.0400);transform-origin:left 50%;">Wed, Jun 12,2025</div>
<div class="r badge" style="left:359.3px;top:962.55px;width:74.6px;height:27px;background:#D0F5E1;border-radius:5px;"></div>
<div class="t" style="top:968.15px;left:396.60px;font-size:15.6px;line-height:15.6px;color:#0E9C45;font-weight:400;width:100px;margin-left:-50.00px;text-align:center;-webkit-text-stroke-width:0.55px;transform:scaleX(1.0601);transform-origin:center 50%;">On-time</div>
<div class="t" style="top:967.75px;left:587.80px;font-size:18.3px;line-height:18.3px;color:#1A1A1A;font-weight:400;width:160px;margin-left:-80.00px;text-align:center;transform:scaleX(1.0200);transform-origin:center 50%;">09:50 AM</div>
<div class="t" style="top:967.75px;left:775.30px;font-size:18.3px;line-height:18.3px;color:#1A1A1A;font-weight:400;width:160px;margin-left:-80.00px;text-align:center;transform:scaleX(1.0200);transform-origin:center 50%;">04:50 PM</div>
<div class="t" style="top:967.75px;left:962.60px;font-size:18.3px;line-height:18.3px;color:#1A1A1A;font-weight:400;width:160px;margin-left:-80.00px;text-align:center;transform:scaleX(1.0200);transform-origin:center 50%;">30 min</div>
<div class="t" style="top:967.75px;left:1150.00px;font-size:18.3px;line-height:18.3px;color:#1A1A1A;font-weight:400;width:160px;margin-left:-80.00px;text-align:center;transform:scaleX(1.0200);transform-origin:center 50%;">-</div>
<div class="t" style="top:967.75px;left:1338.00px;font-size:18.3px;line-height:18.3px;color:#1A1A1A;font-weight:400;width:160px;margin-left:-80.00px;text-align:center;transform:scaleX(1.0200);transform-origin:center 50%;">6h 30m</div>
<svg class="r" style="left:1505px;top:960.50px" width="35" height="30" viewBox="0 0 35 30">
<path d="M9.6 6.7 C8.7 8.2 8.1 10.3 8.2 12.4 C8.3 14.6 9.4 16 9.9 17.6 L9.9 20.6 C9.9 21.6 10.6 22.3 11.6 22.3 L21.2 22.3 C22 22.3 22.5 21.8 22.5 21 L22.5 19.4 C22.5 17.6 21.2 16.3 19.2 16.2 L16.3 15.9 C12.8 15.6 10.4 13.2 10.3 10.1 L10.2 6.7 Z" fill="none" stroke="#1A6AF4" stroke-width="1.35" stroke-linejoin="round"/>
<circle cx="16.1" cy="10.7" r="2.75" fill="none" stroke="#1A6AF4" stroke-width="1.35"/>
<path d="M13.6 21.6 C14.2 20.2 15.2 19.4 16.6 19.4 L18.8 19.4" fill="none" stroke="#1A6AF4" stroke-width="1.35" stroke-linecap="round"/>
<path d="M7.7 24.5 L24.7 24.5" stroke="#1A6AF4" stroke-width="1.35" stroke-linecap="round"/>
</svg>
<div class="t" style="top:967.45px;left:1541.60px;font-size:18.7px;line-height:18.7px;color:#1A6AF4;font-weight:400;transform:scaleX(0.9956);transform-origin:left 50%;">Raise A Conflict</div>
<div class="r" style="left:73px;top:1009px;width:1677px;height:1px;background:#D9DCE0;"></div>
<div class="t" style="top:1035.25px;left:86.30px;font-size:18.3px;line-height:18.3px;color:#141414;font-weight:-webkit-text-stroke-width:0.3px;;transform:scaleX(1.0400);transform-origin:left 50%;">Thu, Jun 13,2025</div>
<div class="r badge" style="left:356.1px;top:1030.25px;width:80.7px;height:27.3px;background:#EDEFF2;border-radius:6px;"></div>
<div class="t" style="top:1035.65px;left:396.60px;font-size:15.6px;line-height:15.6px;color:#1F2C39;font-weight:400;width:100px;margin-left:-50.00px;text-align:center;-webkit-text-stroke-width:0.55px;transform:scaleX(1.0366);transform-origin:center 50%;">On-leave</div>
<div class="t" style="top:1035.25px;left:587.80px;font-size:18.3px;line-height:18.3px;color:#1A1A1A;font-weight:400;width:160px;margin-left:-80.00px;text-align:center;transform:scaleX(1.0200);transform-origin:center 50%;">-</div>
<div class="t" style="top:1035.25px;left:775.30px;font-size:18.3px;line-height:18.3px;color:#1A1A1A;font-weight:400;width:160px;margin-left:-80.00px;text-align:center;transform:scaleX(1.0200);transform-origin:center 50%;">-</div>
<div class="t" style="top:1035.25px;left:962.60px;font-size:18.3px;line-height:18.3px;color:#1A1A1A;font-weight:400;width:160px;margin-left:-80.00px;text-align:center;transform:scaleX(1.0200);transform-origin:center 50%;">-</div>
<div class="t" style="top:1035.25px;left:1150.00px;font-size:18.3px;line-height:18.3px;color:#1A1A1A;font-weight:400;width:160px;margin-left:-80.00px;text-align:center;transform:scaleX(1.0200);transform-origin:center 50%;">-</div>
<div class="t" style="top:1035.25px;left:1338.00px;font-size:18.3px;line-height:18.3px;color:#1A1A1A;font-weight:400;width:160px;margin-left:-80.00px;text-align:center;transform:scaleX(1.0200);transform-origin:center 50%;">-</div>
<svg class="r" style="left:1505px;top:1028.00px" width="35" height="30" viewBox="0 0 35 30">
<path d="M9.6 6.7 C8.7 8.2 8.1 10.3 8.2 12.4 C8.3 14.6 9.4 16 9.9 17.6 L9.9 20.6 C9.9 21.6 10.6 22.3 11.6 22.3 L21.2 22.3 C22 22.3 22.5 21.8 22.5 21 L22.5 19.4 C22.5 17.6 21.2 16.3 19.2 16.2 L16.3 15.9 C12.8 15.6 10.4 13.2 10.3 10.1 L10.2 6.7 Z" fill="none" stroke="#1A6AF4" stroke-width="1.35" stroke-linejoin="round"/>
<circle cx="16.1" cy="10.7" r="2.75" fill="none" stroke="#1A6AF4" stroke-width="1.35"/>
<path d="M13.6 21.6 C14.2 20.2 15.2 19.4 16.6 19.4 L18.8 19.4" fill="none" stroke="#1A6AF4" stroke-width="1.35" stroke-linecap="round"/>
<path d="M7.7 24.5 L24.7 24.5" stroke="#1A6AF4" stroke-width="1.35" stroke-linecap="round"/>
</svg>
<div class="t" style="top:1034.95px;left:1541.60px;font-size:18.7px;line-height:18.7px;color:#1A6AF4;font-weight:400;transform:scaleX(0.9956);transform-origin:left 50%;">Raise A Conflict</div>
<div class="r" style="left:73px;top:1076px;width:1677px;height:1px;background:#D9DCE0;"></div>
<div class="t" style="top:1102.75px;left:86.30px;font-size:18.3px;line-height:18.3px;color:#141414;font-weight:-webkit-text-stroke-width:0.3px;;transform:scaleX(1.0400);transform-origin:left 50%;">Fri, Jun 14,2025</div>
<div class="r badge" style="left:359.3px;top:1097.55px;width:74.6px;height:27px;background:#D0F5E1;border-radius:5px;"></div>
<div class="t" style="top:1103.15px;left:396.60px;font-size:15.6px;line-height:15.6px;color:#0E9C45;font-weight:400;width:100px;margin-left:-50.00px;text-align:center;-webkit-text-stroke-width:0.55px;transform:scaleX(1.0601);transform-origin:center 50%;">On-time</div>
<div class="t" style="top:1102.75px;left:587.80px;font-size:18.3px;line-height:18.3px;color:#1A1A1A;font-weight:400;width:160px;margin-left:-80.00px;text-align:center;transform:scaleX(1.0200);transform-origin:center 50%;">09:20 AM</div>
<div class="t" style="top:1102.75px;left:775.30px;font-size:18.3px;line-height:18.3px;color:#1A1A1A;font-weight:400;width:160px;margin-left:-80.00px;text-align:center;transform:scaleX(1.0200);transform-origin:center 50%;">06:15 PM</div>
<div class="t" style="top:1102.75px;left:962.60px;font-size:18.3px;line-height:18.3px;color:#1A1A1A;font-weight:400;width:160px;margin-left:-80.00px;text-align:center;transform:scaleX(1.0200);transform-origin:center 50%;">30 min</div>
<div class="t" style="top:1102.75px;left:1150.00px;font-size:18.3px;line-height:18.3px;color:#1A1A1A;font-weight:400;width:160px;margin-left:-80.00px;text-align:center;transform:scaleX(1.0200);transform-origin:center 50%;">25 min</div>
<div class="t" style="top:1102.75px;left:1338.00px;font-size:18.3px;line-height:18.3px;color:#1A1A1A;font-weight:400;width:160px;margin-left:-80.00px;text-align:center;transform:scaleX(1.0200);transform-origin:center 50%;">8h 25m</div>
<svg class="r" style="left:1505px;top:1095.50px" width="35" height="30" viewBox="0 0 35 30">
<path d="M9.6 6.7 C8.7 8.2 8.1 10.3 8.2 12.4 C8.3 14.6 9.4 16 9.9 17.6 L9.9 20.6 C9.9 21.6 10.6 22.3 11.6 22.3 L21.2 22.3 C22 22.3 22.5 21.8 22.5 21 L22.5 19.4 C22.5 17.6 21.2 16.3 19.2 16.2 L16.3 15.9 C12.8 15.6 10.4 13.2 10.3 10.1 L10.2 6.7 Z" fill="none" stroke="#1A6AF4" stroke-width="1.35" stroke-linejoin="round"/>
<circle cx="16.1" cy="10.7" r="2.75" fill="none" stroke="#1A6AF4" stroke-width="1.35"/>
<path d="M13.6 21.6 C14.2 20.2 15.2 19.4 16.6 19.4 L18.8 19.4" fill="none" stroke="#1A6AF4" stroke-width="1.35" stroke-linecap="round"/>
<path d="M7.7 24.5 L24.7 24.5" stroke="#1A6AF4" stroke-width="1.35" stroke-linecap="round"/>
</svg>
<div class="t" style="top:1102.45px;left:1541.60px;font-size:18.7px;line-height:18.7px;color:#1A6AF4;font-weight:400;transform:scaleX(0.9956);transform-origin:left 50%;">Raise A Conflict</div>
<div class="r" style="left:73px;top:1144px;width:1677px;height:1px;background:#D9DCE0;"></div>
<div class="t" style="top:1170.25px;left:86.30px;font-size:18.3px;line-height:18.3px;color:#141414;font-weight:-webkit-text-stroke-width:0.3px;;transform:scaleX(1.0400);transform-origin:left 50%;">Fri, Jun 15,2025</div>
<div class="r badge" style="left:359.3px;top:1165.05px;width:74.6px;height:27px;background:#D0F5E1;border-radius:5px;"></div>
<div class="t" style="top:1170.65px;left:396.60px;font-size:15.6px;line-height:15.6px;color:#0E9C45;font-weight:400;width:100px;margin-left:-50.00px;text-align:center;-webkit-text-stroke-width:0.55px;transform:scaleX(1.0601);transform-origin:center 50%;">On-time</div>
<div class="t" style="top:1170.25px;left:587.80px;font-size:18.3px;line-height:18.3px;color:#1A1A1A;font-weight:400;width:160px;margin-left:-80.00px;text-align:center;transform:scaleX(1.0200);transform-origin:center 50%;">09:20 AM</div>
<div class="t" style="top:1170.25px;left:775.30px;font-size:18.3px;line-height:18.3px;color:#1A1A1A;font-weight:400;width:160px;margin-left:-80.00px;text-align:center;transform:scaleX(1.0200);transform-origin:center 50%;">06:15 PM</div>
<div class="t" style="top:1170.25px;left:962.60px;font-size:18.3px;line-height:18.3px;color:#1A1A1A;font-weight:400;width:160px;margin-left:-80.00px;text-align:center;transform:scaleX(1.0200);transform-origin:center 50%;">30 min</div>
<div class="t" style="top:1170.25px;left:1150.00px;font-size:18.3px;line-height:18.3px;color:#1A1A1A;font-weight:400;width:160px;margin-left:-80.00px;text-align:center;transform:scaleX(1.0200);transform-origin:center 50%;">-</div>
<div class="t" style="top:1170.25px;left:1338.00px;font-size:18.3px;line-height:18.3px;color:#1A1A1A;font-weight:400;width:160px;margin-left:-80.00px;text-align:center;transform:scaleX(1.0200);transform-origin:center 50%;">8h 00m</div>
<svg class="r" style="left:1505px;top:1163.00px" width="35" height="30" viewBox="0 0 35 30">
<path d="M9.6 6.7 C8.7 8.2 8.1 10.3 8.2 12.4 C8.3 14.6 9.4 16 9.9 17.6 L9.9 20.6 C9.9 21.6 10.6 22.3 11.6 22.3 L21.2 22.3 C22 22.3 22.5 21.8 22.5 21 L22.5 19.4 C22.5 17.6 21.2 16.3 19.2 16.2 L16.3 15.9 C12.8 15.6 10.4 13.2 10.3 10.1 L10.2 6.7 Z" fill="none" stroke="#1A6AF4" stroke-width="1.35" stroke-linejoin="round"/>
<circle cx="16.1" cy="10.7" r="2.75" fill="none" stroke="#1A6AF4" stroke-width="1.35"/>
<path d="M13.6 21.6 C14.2 20.2 15.2 19.4 16.6 19.4 L18.8 19.4" fill="none" stroke="#1A6AF4" stroke-width="1.35" stroke-linecap="round"/>
<path d="M7.7 24.5 L24.7 24.5" stroke="#1A6AF4" stroke-width="1.35" stroke-linecap="round"/>
</svg>
<div class="t" style="top:1169.95px;left:1541.60px;font-size:18.7px;line-height:18.7px;color:#1A6AF4;font-weight:400;transform:scaleX(0.9956);transform-origin:left 50%;">Raise A Conflict</div>
</div>
</body></html>
